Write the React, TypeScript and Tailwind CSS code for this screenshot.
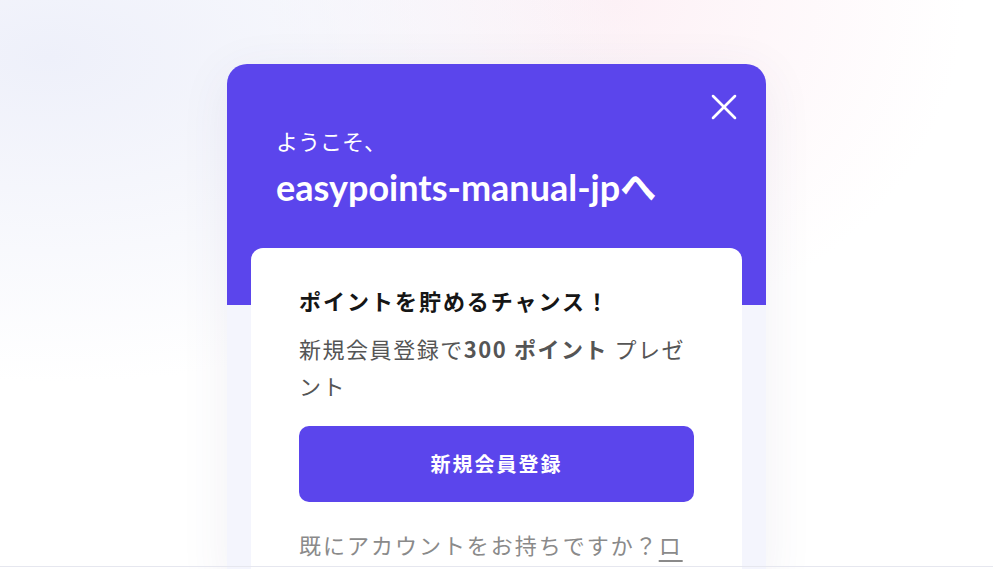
import { X } from "lucide-react";

export default function App() {
  return (
    <div className="relative h-[569px] w-full overflow-hidden bg-white bg-[radial-gradient(ellipse_at_5%_10%,#eef0fa_0%,rgba(255,255,255,0)_45%),radial-gradient(ellipse_at_62%_0%,#fdf1f6_0%,rgba(255,255,255,0)_40%)] font-['Lato','Noto_Sans_CJK_JP',sans-serif]">
      <div className="flex justify-center pt-[64px]">
        <div className="relative w-[539px] h-[520px] rounded-t-[20px] bg-[linear-gradient(to_bottom,#5b45ec_241px,#f4f5fd_241px)] shadow-[0_10px_50px_rgba(80,60,120,0.08)]">
          <button className="absolute right-[20px] top-[21px] text-white">
            <X className="w-[44px] h-[44px]" strokeWidth={1.4} />
          </button>

          <div className="px-[49px] pt-[60px] text-white">
            <p className="text-[22px] leading-[33px] font-['Noto_Sans_CJK_JP',sans-serif]">ようこそ、</p>
            <h1 className="mt-[6px] text-[36px] leading-[44px] font-bold">
              easypoints-manual-jp<span className="font-['Noto_Sans_CJK_JP',sans-serif]">へ</span>
            </h1>
          </div>

          <div className="mx-[24px] mt-[39px] rounded-[12px] bg-white px-[48px] pt-[36px] font-['Noto_Sans_CJK_JP',sans-serif]">
            <h2 className="text-[22px] leading-[32px] font-bold tracking-[0.09em] text-[#161616]">
              ポイントを貯めるチャンス！
            </h2>
            <p className="mt-[14px] text-[22px] leading-[37px] tracking-[0.07em] text-[#555]">
              新規会員登録で<b className="font-bold">300 ポイント</b> プレゼント
            </p>
            <button className="mt-[22px] flex h-[76px] w-full items-center justify-center rounded-[10px] bg-[#5b45ec] text-[20px] font-bold tracking-[0.1em] text-white">
              新規会員登録
            </button>
            <p className="mt-[24px] text-[22px] leading-[37px] tracking-[0.09em] text-[#8a8a8a]">
              既にアカウントをお持ちですか？<a className="underline underline-offset-[6px]">ログイン</a>
            </p>
          </div>
        </div>
      </div>
      <div className="absolute left-0 right-0 top-[566px] h-px bg-[#e6e7ef]" />
    </div>
  );
}
